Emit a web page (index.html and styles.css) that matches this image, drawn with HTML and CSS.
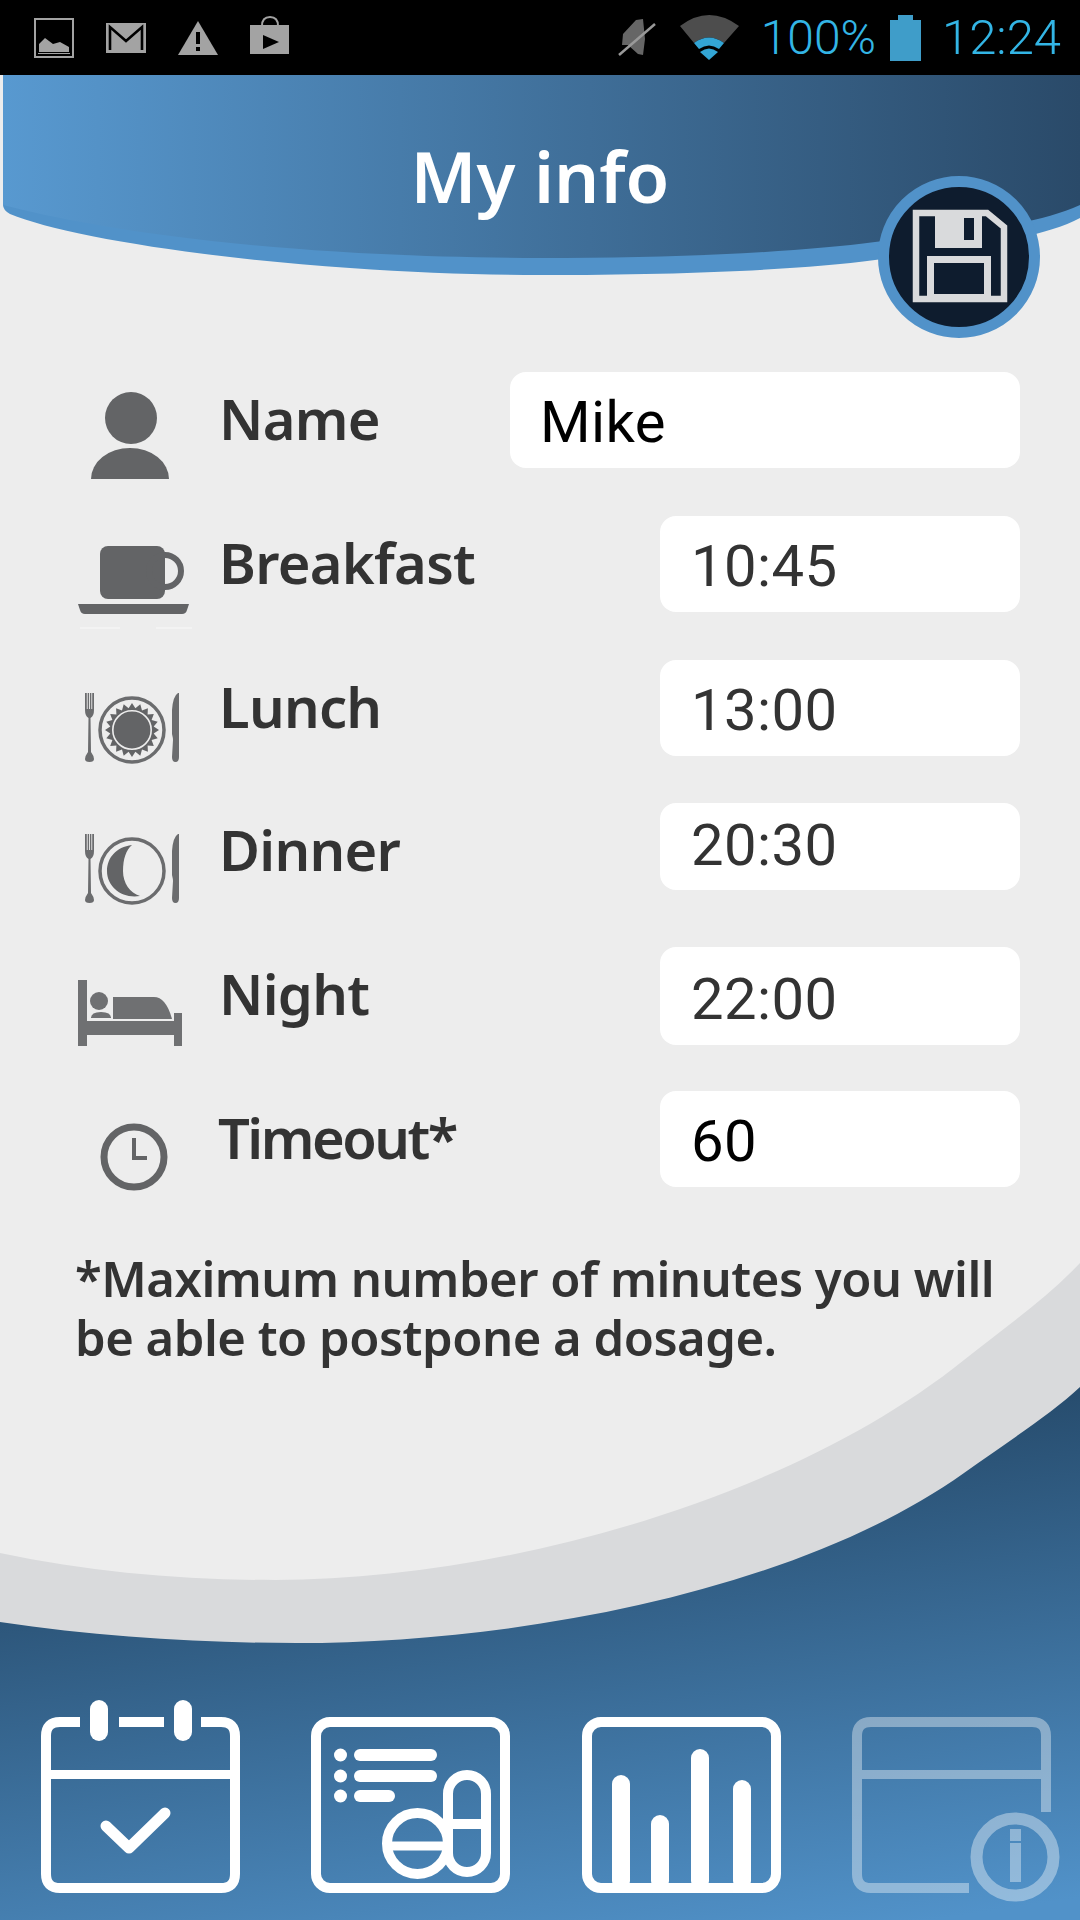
FILE: index.html

```html
<!DOCTYPE html>
<html lang="en">
<head>
    <meta charset="UTF-8">
    <meta name="viewport" content="width=device-width, initial-scale=1.0">
    <title>My info</title>
    <link rel="stylesheet" href="styles.css">
</head>
<body>
<div class="page">
    <!-- background curves -->
    <svg class="backdrop" viewBox="0 0 1080 1920">
        <defs>
            <linearGradient id="headGrad" x1="0" y1="0" x2="1" y2="0">
                <stop offset="0" stop-color="#5899d0"/>
                <stop offset="1" stop-color="#2a4a69"/>
            </linearGradient>
            <linearGradient id="footGrad" gradientUnits="userSpaceOnUse" x1="0" y1="1540" x2="76" y2="2048">
                <stop offset="0" stop-color="#264b6c"/>
                <stop offset="1" stop-color="#5192c9"/>
            </linearGradient>
        </defs>
        <path fill="#5192c9" d="M3 75V205Q3 210 10 214C60 235 200 258 350 268C420 273 480 275 540 275C680 275 800 270 875 260C950 250 1040 240 1080 218V75Z"/>
        <path fill="url(#headGrad)" d="M3 75V205C80 225 250 257 540 258C680 258 800 252 875 242C950 232 1030 228 1080 205V75Z"/>
        <path fill="#d9dadc" d="M0 1553C90 1572 180 1580 275 1580C500 1580 790 1500 964 1360C1005 1327 1045 1300 1080 1263V1700H0Z"/>
        <path fill="url(#footGrad)" d="M0 1622C100 1637 200 1643 296 1643C520 1643 800 1590 964 1473C1010 1440 1050 1415 1080 1387V1920H0Z"/>
    </svg>

    <header class="status">
        <div class="status-left">
            <svg width="40" height="40" viewBox="0 0 40 40"><rect x="1" y="1" width="38" height="38" fill="none" stroke="#a3a3a3" stroke-width="2"/><rect x="4" y="35" width="32" height="1" fill="#a3a3a3"/><path fill="#a3a3a3" d="M5 34V26L11 20L19 26L26 24L35 29V34Z"/></svg>
            <svg width="40" height="30" viewBox="0 0 40 30"><rect width="40" height="30" fill="#a3a3a3"/><path fill="none" stroke="#000" stroke-width="2.6" d="M4 27V4L20 18L36 4V27"/></svg>
            <svg width="40" height="36" viewBox="0 0 40 36"><path fill="#a3a3a3" d="M20 1L40 35H0Z"/><rect x="18" y="12" width="4" height="12" fill="#000"/><rect x="18" y="27" width="4" height="4" fill="#000"/></svg>
            <svg class="bag" width="39" height="38" viewBox="0 0 39 38"><path fill="none" stroke="#a3a3a3" stroke-width="2" d="M12 10Q12 1 20 1Q28 1 28 10"/><rect y="9" width="39" height="29" fill="#a3a3a3"/><path fill="#000" d="M13 19L29 26L13 33Z"/></svg>
        </div>
        <div class="status-right">
            <svg class="mute" width="38" height="41" viewBox="0 0 38 41"><path fill="#666" d="M5 17L18 3L25 2L27 22L25 38L20 37L10 28H4Z"/><path stroke="#999" stroke-width="2.5" d="M1 38L37 7"/></svg>
            <svg class="wifi" width="60" height="45" viewBox="0 0 60 45"><path fill="#4d4d4d" d="M0 11Q29 -11 59 11L44 28Q29 17 14 28Z"/><path fill="#33a5d5" d="M14 28Q29 17 44 28L39 34Q29 27 19 34Z"/><path fill="#33a5d5" d="M20 37Q29 30 38 37L29 45Z"/></svg>
            <span class="status-text">100%</span>
            <svg class="battery" width="31" height="46" viewBox="0 0 31 46"><rect x="8" width="15" height="6" fill="#3f9dc9"/><rect y="5" width="31" height="41" fill="#3f9dc9"/></svg>
            <span class="status-text clock">12:24</span>
        </div>
    </header>

    <div class="topbar">
        <h1>My info</h1>
        <button class="save">
            <svg width="162" height="162" viewBox="0 0 162 162">
                <circle cx="81" cy="81" r="75.5" fill="#0e1c2e" stroke="#5192c9" stroke-width="11"/>
                <path fill="none" stroke="#d9dadc" stroke-width="6.5" d="M38 37H109L126 51V123H38Z"/>
                <path fill="#d9dadc" d="M57 36H104V72H57Z"/>
                <rect x="86" y="42" width="10" height="22" fill="#0e1c2e"/>
                <rect x="52.5" y="83.5" width="57" height="38" fill="none" stroke="#d9dadc" stroke-width="7"/>
            </svg>
        </button>
    </div>

    <main class="form">
        <div class="row">
            <svg class="row-icon" viewBox="0 0 146 144"><circle cx="55" cy="46" r="26" fill="#636466"/><path fill="#636466" d="M15 107A39 31 0 0 1 93 107Z"/></svg>
            <span class="label">Name</span>
            <span class="field field-name">Mike</span>
        </div>
        <div class="row">
            <svg class="row-icon" viewBox="0 0 146 144"><rect x="24" y="30" width="65" height="53" rx="8" fill="#636466"/><circle cx="89" cy="55" r="16" fill="none" stroke="#636466" stroke-width="6"/><path fill="#636466" d="M2 88H113L111 94Q110 98 106 98H9Q5 98 4 94Z"/><rect x="4" y="111" width="40" height="2" fill="#f3f3f3"/><rect x="80" y="111" width="36" height="2" fill="#f3f3f3"/></svg>
            <span class="label">Breakfast</span>
            <span class="field">10:45</span>
        </div>
        <div class="row">
            <svg class="row-icon" viewBox="0 0 146 144">
                <path fill="#6b6c6e" d="M9 33V50Q9 56 12.5 58L12 92Q9 96 9 99Q9 102 13.5 102Q18 102 18 99Q18 96 15 92L14.5 58Q18 56 18 50V33Z"/>
                <path stroke="#ededed" stroke-width="0.9" d="M11.25 33V49M13.5 33V49M15.75 33V49"/>
                <path fill="#6b6c6e" d="M102 33Q97 36 96 50V74Q97 78 97 80L96 97Q96 102 99.5 102Q103 102 103 97V33Z"/>
                <circle cx="56" cy="70" r="32" fill="none" stroke="#6b6c6e" stroke-width="3.5"/>
                <polygon transform="translate(56 70)" fill="#636466" points="27,0 21.7,3.4 25.7,8.3 19.6,10 21.8,15.9 15.6,15.6 15.9,21.8 10,19.6 8.3,25.7 3.4,21.7 0,27 -3.4,21.7 -8.3,25.7 -10,19.6 -15.9,21.8 -15.6,15.6 -21.8,15.9 -19.6,10 -25.7,8.3 -21.7,3.4 -27,0 -21.7,-3.4 -25.7,-8.3 -19.6,-10 -21.8,-15.9 -15.6,-15.6 -15.9,-21.8 -10,-19.6 -8.3,-25.7 -3.4,-21.7 0,-27 3.4,-21.7 8.3,-25.7 10,-19.6 15.9,-21.8 15.6,-15.6 21.8,-15.9 19.6,-10 25.7,-8.3 21.7,-3.4"/>
                <circle cx="56" cy="70" r="19.2" fill="#636466" stroke="#ededed" stroke-width="1.6"/>
            </svg>
            <span class="label">Lunch</span>
            <span class="field">13:00</span>
        </div>
        <div class="row">
            <svg class="row-icon" viewBox="0 0 146 144">
                <g transform="translate(0 -2)">
                    <path fill="#6b6c6e" d="M9 33V50Q9 56 12.5 58L12 92Q9 96 9 99Q9 102 13.5 102Q18 102 18 99Q18 96 15 92L14.5 58Q18 56 18 50V33Z"/>
                    <path stroke="#ededed" stroke-width="0.9" d="M11.25 33V49M13.5 33V49M15.75 33V49"/>
                    <path fill="#6b6c6e" d="M102 33Q97 36 96 50V74Q97 78 97 80L96 97Q96 102 99.5 102Q103 102 103 97V33Z"/>
                </g>
                <circle cx="56" cy="68" r="32" fill="none" stroke="#6b6c6e" stroke-width="3.5"/>
                <path fill="#636466" d="M56 42C40 44 31 55 31 68C31 84 46 96 64 93C54 90 47 80 47 68C47 56 50 47 56 42Z"/>
            </svg>
            <span class="label">Dinner</span>
            <span class="field field-short">20:30</span>
        </div>
        <div class="row">
            <svg class="row-icon" viewBox="0 0 146 144"><g fill="#6f7072"><rect x="2" y="33" width="9" height="66"/><rect x="98" y="66" width="8" height="33"/><rect x="2" y="74" width="104" height="14"/><circle cx="23" cy="54" r="9"/><path d="M15 71Q15 65 25 65Q35 65 35 71Z"/><path d="M37 50H78Q90 50 96 72H37Z"/></g></svg>
            <span class="label">Night</span>
            <span class="field field-tall">22:00</span>
        </div>
        <div class="row">
            <svg class="row-icon" viewBox="0 0 146 144"><circle cx="58" cy="66" r="30" fill="none" stroke="#636466" stroke-width="7"/><path fill="none" stroke="#636466" stroke-width="4" d="M58 47V67H71"/></svg>
            <span class="label label-timeout">Timeout*</span>
            <span class="field field-black">60</span>
        </div>
    </main>

    <p class="note">*Maximum number of minutes you will<br>be able to postpone a dosage.</p>

    <nav class="tabs">
        <svg class="tab" viewBox="0 0 220 210">
            <path fill="none" stroke="#fff" stroke-width="10" d="M39 22H19Q5 22 5 36V174Q5 188 19 188H180Q194 188 194 174V36Q194 22 180 22H160M78 22H123"/>
            <rect x="49" width="18" height="41" rx="9" fill="#fff"/>
            <rect x="133" width="18" height="41" rx="9" fill="#fff"/>
            <path stroke="#fff" stroke-width="9" d="M5 74.5H194"/>
            <path fill="none" stroke="#fff" stroke-width="11" stroke-linecap="round" stroke-linejoin="round" d="M65 126L88 148L124 113"/>
        </svg>
        <svg class="tab" viewBox="0 0 220 210">
            <rect x="5" y="22" width="189" height="166" rx="14" fill="none" stroke="#fff" stroke-width="10"/>
            <g fill="#fff">
                <circle cx="29.5" cy="55" r="6.5"/><circle cx="29.5" cy="76" r="6.5"/><circle cx="29.5" cy="96" r="6.5"/>
                <rect x="43" y="49" width="83" height="12" rx="6"/><rect x="43" y="70" width="83" height="12" rx="6"/><rect x="43" y="90" width="41" height="12" rx="6"/>
            </g>
            <rect x="137" y="75" width="38" height="97" rx="19" fill="none" stroke="#fff" stroke-width="10"/>
            <path stroke="#fff" stroke-width="10" d="M137 124H175"/>
            <circle cx="106.5" cy="143.5" r="30.5" fill="none" stroke="#fff" stroke-width="10"/>
            <path stroke="#fff" stroke-width="9" d="M76 146H137"/>
        </svg>
        <svg class="tab" viewBox="0 0 220 210">
            <rect x="5" y="22" width="189" height="166" rx="14" fill="none" stroke="#fff" stroke-width="10"/>
            <g fill="#fff">
                <rect x="30" y="75" width="18" height="115" rx="9"/>
                <rect x="69" y="115" width="18" height="75" rx="9"/>
                <rect x="109" y="49" width="18" height="141" rx="9"/>
                <rect x="151" y="80" width="18" height="110" rx="9"/>
            </g>
        </svg>
        <svg class="tab tab-off" viewBox="0 0 220 210">
            <path fill="none" stroke="#fff" stroke-width="10" d="M117 188H19Q5 188 5 174V36Q5 22 19 22H180Q194 22 194 36V112"/>
            <path stroke="#fff" stroke-width="9" d="M10 74.5H189"/>
            <circle cx="163" cy="157" r="38.5" fill="none" stroke="#fff" stroke-width="12"/>
            <rect x="158" y="129" width="11" height="12" fill="#fff"/>
            <rect x="158" y="143" width="11" height="39" fill="#fff"/>
        </svg>
    </nav>
</div>
</body>
</html>
```

FILE: styles.css

```css
body {
    margin: 0;
    background-color: #ededed;
    font-family: 'Noto Sans', sans-serif;
}
.page {
    position: relative;
    width: 1080px;
    height: 1920px;
    overflow: hidden;
    display: flex;
    flex-direction: column;
}
.backdrop {
    position: absolute;
    top: 0;
    left: 0;
    width: 1080px;
    height: 1920px;
}

/* Status bar */
.status {
    position: relative;
    height: 75px;
    flex-shrink: 0;
    background-color: #000;
    display: flex;
    justify-content: space-between;
    align-items: center;
    padding: 0 19px 0 34px;
    box-sizing: border-box;
}
.status-left {
    display: flex;
    align-items: center;
    gap: 32px;
}
.bag {
    margin-bottom: 6px;
}
.status-right {
    display: flex;
    align-items: center;
}
.status-text {
    font-family: Roboto, sans-serif;
    font-weight: 300;
    font-size: 48px;
    color: #33b5e5;
    line-height: 75px;
}
.clock {
    font-size: 49px;
}
.mute {
    margin-right: 24px;
}
.wifi {
    margin-right: 21px;
}
.battery {
    margin: 0 21px 0 14px;
}

/* Title */
.topbar {
    position: relative;
    height: 297px;
    flex-shrink: 0;
}
.topbar h1 {
    margin: 0;
    padding-top: 53px;
    text-align: center;
    color: #fff;
    font-size: 71px;
    font-weight: 600;
    line-height: 96px;
}
.save {
    position: absolute;
    left: 878px;
    top: 101px;
    width: 162px;
    height: 162px;
    padding: 0;
    border: none;
    background: none;
}
.save svg {
    display: block;
}

/* Form */
.form {
    position: relative;
    padding: 0 60px 0 76px;
}
.row {
    height: 143.8px;
    display: flex;
    align-items: flex-start;
}
.row-icon {
    width: 146px;
    height: 144px;
    flex-shrink: 0;
}
.label {
    margin-left: -3px;
    color: #333;
    font-size: 56px;
    font-weight: 600;
    letter-spacing: -0.7px;
    line-height: 92px;
}
.label-timeout {
    margin-left: -4px;
    letter-spacing: -2.5px;
}
.field {
    margin-left: auto;
    width: 360px;
    height: 96px;
    padding-left: 31px;
    box-sizing: border-box;
    background-color: #fff;
    border-radius: 16px;
    font-family: Roboto, sans-serif;
    font-size: 58px;
    letter-spacing: 0.4px;
    line-height: 100px;
    color: #333;
}
.field-name {
    width: 510px;
    padding-left: 30px;
    color: #000;
}
.field-short {
    height: 87px;
    line-height: 84px;
}
.field-tall {
    height: 98px;
    line-height: 104px;
}
.field-black {
    color: #000;
}

/* Footnote */
.note {
    position: relative;
    margin: 14px 0 0;
    padding-left: 75px;
    color: #333;
    font-size: 49px;
    font-weight: 600;
    letter-spacing: -0.5px;
    line-height: 59px;
}

/* Bottom tabs */
.tabs {
    position: relative;
    margin-top: auto;
    height: 220px;
    display: flex;
    gap: 50.3px;
    padding-left: 41px;
}
.tab {
    width: 220px;
    height: 210px;
    flex-shrink: 0;
}
.tab-off {
    opacity: 0.38;
}
```
